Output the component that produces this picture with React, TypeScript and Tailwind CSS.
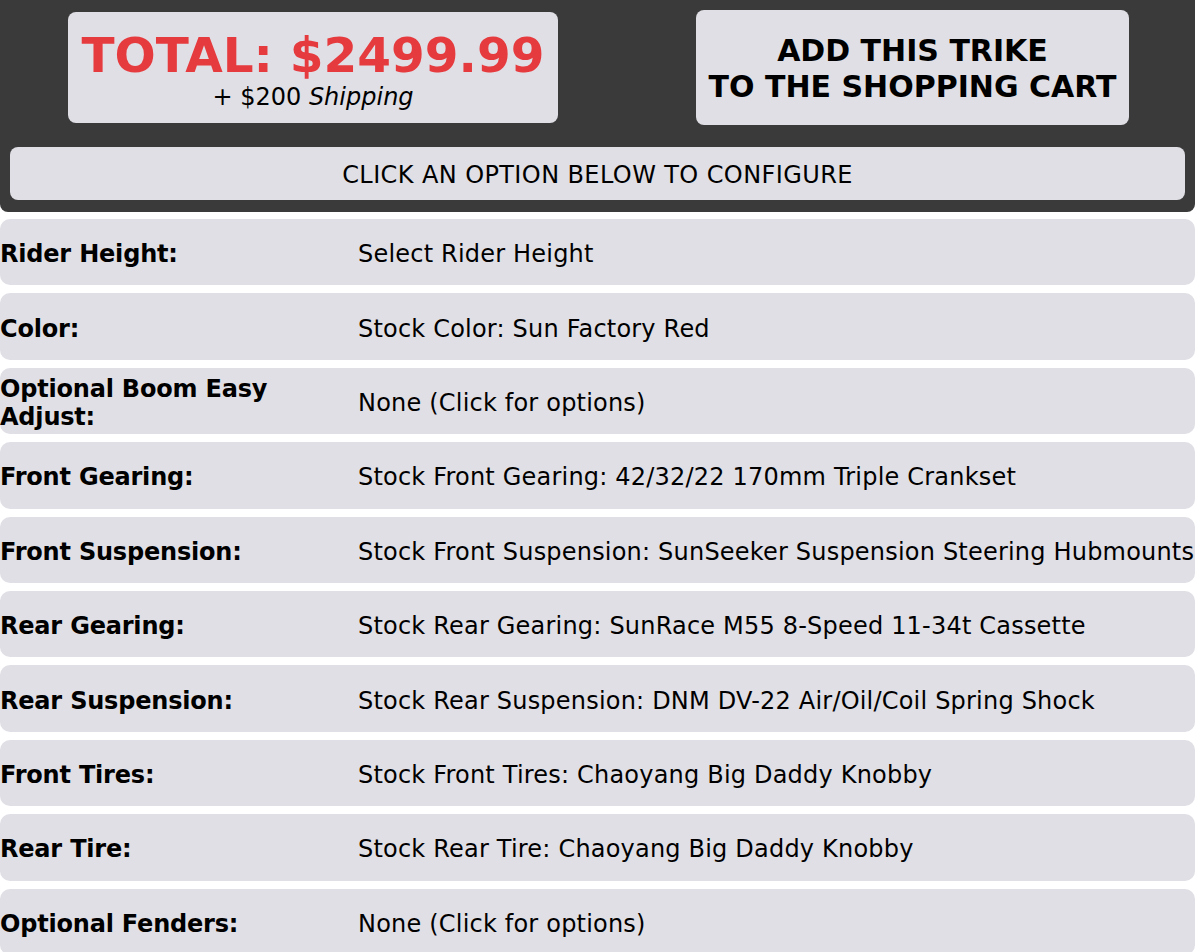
const options = [
  { label: "Rider Height:", value: "Select Rider Height" },
  { label: "Color:", value: "Stock Color: Sun Factory Red" },
  { label: "Optional Boom Easy Adjust:", value: "None (Click for options)" },
  { label: "Front Gearing:", value: "Stock Front Gearing: 42/32/22 170mm Triple Crankset" },
  { label: "Front Suspension:", value: "Stock Front Suspension: SunSeeker Suspension Steering Hubmounts" },
  { label: "Rear Gearing:", value: "Stock Rear Gearing: SunRace M55 8-Speed 11-34t Cassette" },
  { label: "Rear Suspension:", value: "Stock Rear Suspension: DNM DV-22 Air/Oil/Coil Spring Shock" },
  { label: "Front Tires:", value: "Stock Front Tires: Chaoyang Big Daddy Knobby" },
  { label: "Rear Tire:", value: "Stock Rear Tire: Chaoyang Big Daddy Knobby" },
  { label: "Optional Fenders:", value: "None (Click for options)" },
];

export default function App() {
  return (
    <main className="min-h-screen bg-white font-['DejaVu_Sans',Verdana,sans-serif] text-black">
      {/* Header */}
      <div className="rounded-b-lg bg-[#3a3a3a] px-[10px] pb-[12px] pt-[10px]">
        <div className="flex items-start">
          <div className="ml-[58px] mt-[2px] flex h-[111px] w-[490px] flex-col items-center justify-center rounded-lg bg-[#e0dfe5] pt-[3px]">
            <div className="text-[48.5px] font-bold leading-[56px] text-[#e63b3e]">
              TOTAL: $2499.99
            </div>
            <div className="text-[24px] leading-[28px]">
              + $200 <em>Shipping</em>
            </div>
          </div>
          <button className="ml-[138px] flex h-[115px] w-[433px] flex-col items-center justify-center rounded-lg bg-[#e0dfe5] pt-[2px] text-[30px] font-bold leading-[36px]">
            <span>ADD THIS TRIKE</span>
            <span>TO THE SHOPPING CART</span>
          </button>
        </div>
        <div className="mt-[22px] flex h-[53px] items-center justify-center rounded-lg bg-[#e0dfe5] pt-[2px] text-[24px] tracking-[0.4px]">
          CLICK AN OPTION BELOW TO CONFIGURE
        </div>
      </div>

      {/* Options */}
      <div className="mt-[7px] flex flex-col gap-[8px]">
        {options.map((opt) => (
          <div
            key={opt.label}
            className="flex h-[66.4px] items-center rounded-[10px] bg-[#e0dfe5] pt-[4px]"
          >
            <div className="w-[358px] shrink-0 pr-[80px] text-[24px] font-bold leading-[28px] tracking-[-0.2px]">
              {opt.label}
            </div>
            <div className="whitespace-nowrap text-[24px] tracking-[0.2px]">{opt.value}</div>
          </div>
        ))}
      </div>
    </main>
  );
}
